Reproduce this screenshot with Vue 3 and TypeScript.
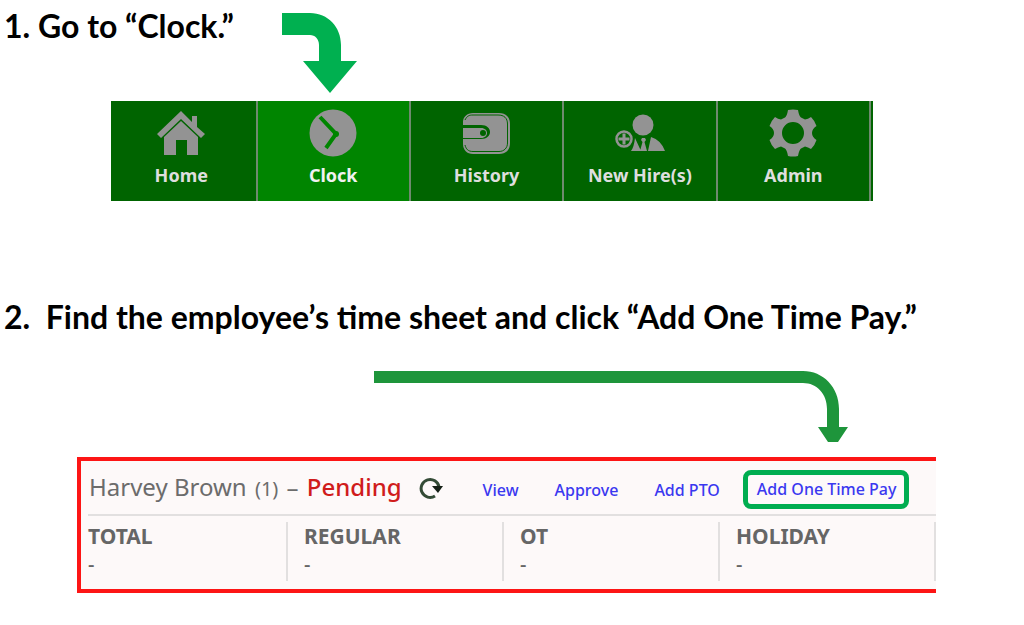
<script setup lang="ts">
import { ref } from 'vue'

type Icon = 'home' | 'clock' | 'history' | 'hire' | 'admin'

interface NavItem {
  label: string
  icon: Icon
}

const navItems: NavItem[] = [
  { label: 'Home', icon: 'home' },
  { label: 'Clock', icon: 'clock' },
  { label: 'History', icon: 'history' },
  { label: 'New Hire(s)', icon: 'hire' },
  { label: 'Admin', icon: 'admin' },
]

const active = ref<Icon>('clock')
const actions: string[] = ['View', 'Approve', 'Add PTO']
const totals = [
  { label: 'TOTAL', value: '-' },
  { label: 'REGULAR', value: '-' },
  { label: 'OT', value: '-' },
  { label: 'HOLIDAY', value: '-' },
]
</script>

<template>
  <main class="guide">
    <section>
      <div class="step-head">
        <h2 class="step-title">1. Go to “Clock.”</h2>
        <svg class="bend-arrow" width="76" height="82" viewBox="0 0 76 82" aria-hidden="true">
          <path d="M0 0H28C46 0 59 14 59 32V48H75L48 80L21 48H37V32C37 26 33 22 28 22H0Z" fill="#00b050" />
        </svg>
      </div>

      <nav class="menu" aria-label="Main">
        <button
          v-for="item in navItems"
          :key="item.icon"
          type="button"
          class="menu-item"
          :class="{ active: active === item.icon }"
          @click="active = item.icon"
        >
          <svg class="menu-icon" width="50" height="50" viewBox="0 0 50 50" aria-hidden="true">
            <g v-if="item.icon === 'home'" fill="#939393">
              <path d="M25 3L36 14V8H41V19L49 26L45 30L25 11L5 30L1 26Z" />
              <path d="M25 13L42 29V47H31V32H20V47H8V29Z" />
            </g>
            <g v-else-if="item.icon === 'clock'">
              <circle cx="25" cy="25" r="23.5" fill="#939393" />
              <path d="M12 9L28 26L18 40" fill="none" stroke="#008500" stroke-width="4" />
              <circle cx="28" cy="26" r="3" fill="#008500" />
            </g>
            <g v-else-if="item.icon === 'history'">
              <path d="M11 5H37C44 5 48 9 48 16V35C48 42 44 46 37 46H11C5 46 1 42 1 36V31H19C31 31 31 17 19 17H1V14C1 9 5 5 11 5Z" fill="#939393" />
              <path d="M3 12C5 8 7 7 11 7H36C42 7 45.500 10 45.500 16V35C45.500 40 42 43.500 37 43.500H11C6 43.500 4 41 3 37" fill="none" stroke="#006400" stroke-width="1" />
              <path d="M1 20H19C27 20 27 30 19 30H1Z" fill="#939393" />
              <circle cx="21" cy="25" r="3" fill="#006400" />
            </g>
            <g v-else-if="item.icon === 'hire'">
              <circle cx="28" cy="17" r="10.500" fill="#939393" />
              <path d="M16 43Q19 39 20 30L26 43ZM36 29Q46 32 50 43H33ZM27 30H30L31 32L29.500 34L32 43H25L27.500 34L26 32Z" fill="#939393" />
              <circle cx="9" cy="31" r="10" fill="#006400" />
              <circle cx="9" cy="31" r="7.500" fill="none" stroke="#939393" stroke-width="2.500" />
              <path d="M9 25.500V36.500M3.500 31H14.500" stroke="#939393" stroke-width="3" />
            </g>
            <path
              v-else
              fill="#939393"
              fill-rule="evenodd"
              d="M20 2Q25 1 30 2Q31 8 33 9.500L37 11.500Q40 11 43 9Q47 13 48.500 18Q44 21 44 25Q44 29 48.500 32Q47 37 43 41Q40 39 37 38.500L33 40.500Q31 42 30 48Q25 49 20 48Q19 42 17 40.500L13 38.500Q10 39 7 41Q3 37 1.500 32Q6 29 6 25Q6 21 1.500 18Q3 13 7 9Q10 11 13 11.500L17 9.500Q19 8 20 2ZM25 14A11 11 0 1 0 25 36A11 11 0 1 0 25 14Z"
            />
          </svg>
          <span>{{ item.label }}</span>
        </button>
      </nav>
    </section>

    <section class="step-two">
      <h2 class="step-title">2.&nbsp; Find the employee’s time sheet and click “Add One Time Pay.”</h2>
      <div class="long-arrow">
        <span class="shaft"></span>
        <svg width="74" height="72" viewBox="0 0 74 72" aria-hidden="true">
          <path d="M0 0H29C49 0 65 16 65 38V56H74L64 71H54L44 56H53V38C53 23 43 12 29 12H0Z" fill="#1e953b" />
        </svg>
      </div>

      <article class="sheet">
        <header class="sheet-head">
          <h3 class="employee">Harvey Brown <small>(1)</small> – <strong>Pending</strong></h3>
          <button type="button" class="refresh" aria-label="Refresh">
            <svg width="24" height="24" viewBox="0 0 24 24" aria-hidden="true">
              <path d="M16 20A9 9 0 1 1 20 11" fill="none" stroke="#344b36" stroke-width="3" />
              <path d="M13 10H24L19 17Z" fill="#152016" />
            </svg>
          </button>
          <div class="actions">
            <a v-for="action in actions" :key="action" href="#">{{ action }}</a>
            <a href="#" class="highlight">Add One Time Pay</a>
          </div>
        </header>
        <table class="totals">
          <thead>
            <tr>
              <th v-for="t in totals" :key="t.label" scope="col">{{ t.label }}</th>
            </tr>
          </thead>
          <tbody>
            <tr>
              <td v-for="t in totals" :key="t.label">{{ t.value }}</td>
            </tr>
          </tbody>
        </table>
      </article>
    </section>
  </main>
</template>

<style>
body {
  margin: 0;
  background: #fff;
}
</style>

<style scoped>
.guide {
  font-family: "Noto Sans", "Open Sans", sans-serif;
  color: #000;
  overflow: hidden;
}

.step-head {
  display: flex;
  gap: 48px;
  padding-top: 8px;
}

.step-title {
  margin: 0 0 0 4px;
  font: bold 32px/36px Lato, "Open Sans", sans-serif;
  white-space: nowrap;
}

.bend-arrow {
  margin-top: 5px;
  flex: none;
}

.menu {
  display: flex;
  margin: 6px 151px 0 111px;
  background: #006400;
  border-right: 2px solid #006400;
}

.menu-item {
  flex: 154 1 0;
  display: flex;
  flex-direction: column;
  align-items: center;
  box-sizing: border-box;
  height: 100px;
  padding: 7px 0 0;
  border: 0;
  border-right: 2px solid #6f8a6f;
  background: #006400;
  color: #dedede;
  font: bold 18px/24px "Noto Sans", "Open Sans", sans-serif;
  white-space: nowrap;
  cursor: pointer;
}

.menu-item:first-child {
  flex-grow: 143;
  padding-right: 4px;
}

.menu-item.active {
  background: #008500;
  color: #f2f2f2;
}

.menu-icon {
  margin-bottom: 5px;
}

.step-two {
  margin-top: 98px;
}

.long-arrow {
  display: flex;
  margin: 36px 176px 14px 374px;
}

.shaft {
  flex: 1;
  height: 12px;
  background: #1e953b;
}

.sheet {
  margin: 0 88px 0 77px;
  padding: 0 0 8px 7px;
  border: 4px solid #fd1515;
  border-right: 0;
  background: #fdf9f9;
}

.sheet-head {
  display: flex;
  align-items: center;
  height: 53px;
  border-bottom: 2px solid #e2e0e0;
}

.employee {
  margin: 0 17px 0 1px;
  color: #6c6c6c;
  font-size: 24px;
  line-height: 32px;
  font-weight: 400;
  white-space: nowrap;
}

.employee small {
  margin: 0 2px;
  font-size: 20px;
}

.employee strong {
  margin-left: 2px;
  color: #d01c1c;
  font-weight: 500;
}

.refresh {
  display: flex;
  padding: 0;
  border: 0;
  background: none;
  cursor: pointer;
}

.actions {
  display: flex;
  align-items: center;
  gap: 36px;
  margin-left: 40px;
  padding-top: 4px;
}

.actions a {
  color: #3a38f0;
  font-size: 16px;
  line-height: 24px;
  font-weight: 500;
  text-decoration: none;
  white-space: nowrap;
}

.actions .highlight {
  margin-left: -13px;
  padding: 2px 8px 3px 9px;
  border: 5px solid #00ad50;
  border-radius: 8px;
}

.totals {
  width: 100%;
  margin-top: 6px;
  border-collapse: collapse;
  table-layout: fixed;
  color: #666;
  text-align: left;
}

.totals th,
.totals td {
  height: 30px;
  padding: 0 0 0 16px;
  border-right: 2px solid #e2e0e0;
  font-size: 21px;
  line-height: 28px;
  vertical-align: top;
}

.totals td {
  height: 29px;
  font-size: 20px;
  line-height: 24px;
  font-weight: 500;
}

.totals th:first-child,
.totals td:first-child {
  width: 198px;
  padding-left: 0;
}
</style>
